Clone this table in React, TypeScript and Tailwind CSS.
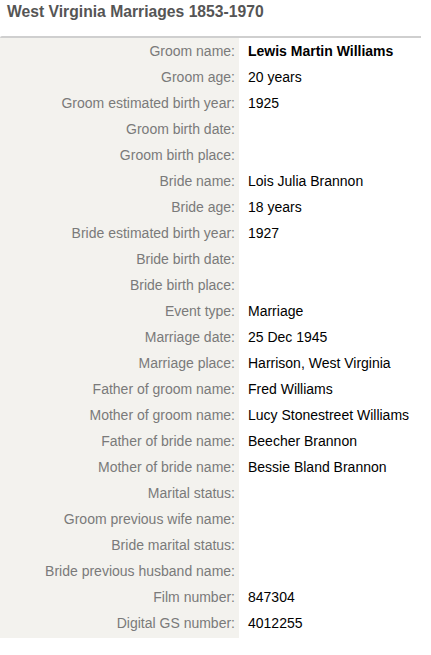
import React from "react";

const rows: [string, string, boolean?][] = [
  ["Groom name", "Lewis Martin Williams", true],
  ["Groom age", "20 years"],
  ["Groom estimated birth year", "1925"],
  ["Groom birth date", ""],
  ["Groom birth place", ""],
  ["Bride name", "Lois Julia Brannon"],
  ["Bride age", "18 years"],
  ["Bride estimated birth year", "1927"],
  ["Bride birth date", ""],
  ["Bride birth place", ""],
  ["Event type", "Marriage"],
  ["Marriage date", "25 Dec 1945"],
  ["Marriage place", "Harrison, West Virginia"],
  ["Father of groom name", "Fred Williams"],
  ["Mother of groom name", "Lucy Stonestreet Williams"],
  ["Father of bride name", "Beecher Brannon"],
  ["Mother of bride name", "Bessie Bland Brannon"],
  ["Marital status", ""],
  ["Groom previous wife name", ""],
  ["Bride marital status", ""],
  ["Bride previous husband name", ""],
  ["Film number", "847304"],
  ["Digital GS number", "4012255"],
];

export default function App() {
  return (
    <div className="w-[431px] h-[655px] bg-white" style={{ fontFamily: '"Liberation Sans", Arial, sans-serif' }}>
      <div className="h-[36px] pl-[7px] pt-[2px] text-[15.7px] font-bold text-[#555555] leading-[20px]">
        West Virginia Marriages 1853-1970
      </div>
      <div className="w-[421px] h-[2px] border-t-2 border-[#cfcfcf] rounded-tl-[3px]" />
      <div className="w-[421px] flex flex-col">
        {rows.map(([label, value, bold], i) => (
          <div key={i} className="flex h-[26px] items-center text-[14px]">
            <div className="w-[239px] h-full bg-[#f3f2ee] flex items-center justify-end pr-[4px] text-[#7a7a7a]">
              {label}:
            </div>
            <div className={`pl-[9px] text-black ${bold ? "font-bold" : ""}`}>{value}</div>
          </div>
        ))}
        <div className="w-[239px] h-[2px] bg-[#f3f2ee]" />
      </div>
    </div>
  );
}
